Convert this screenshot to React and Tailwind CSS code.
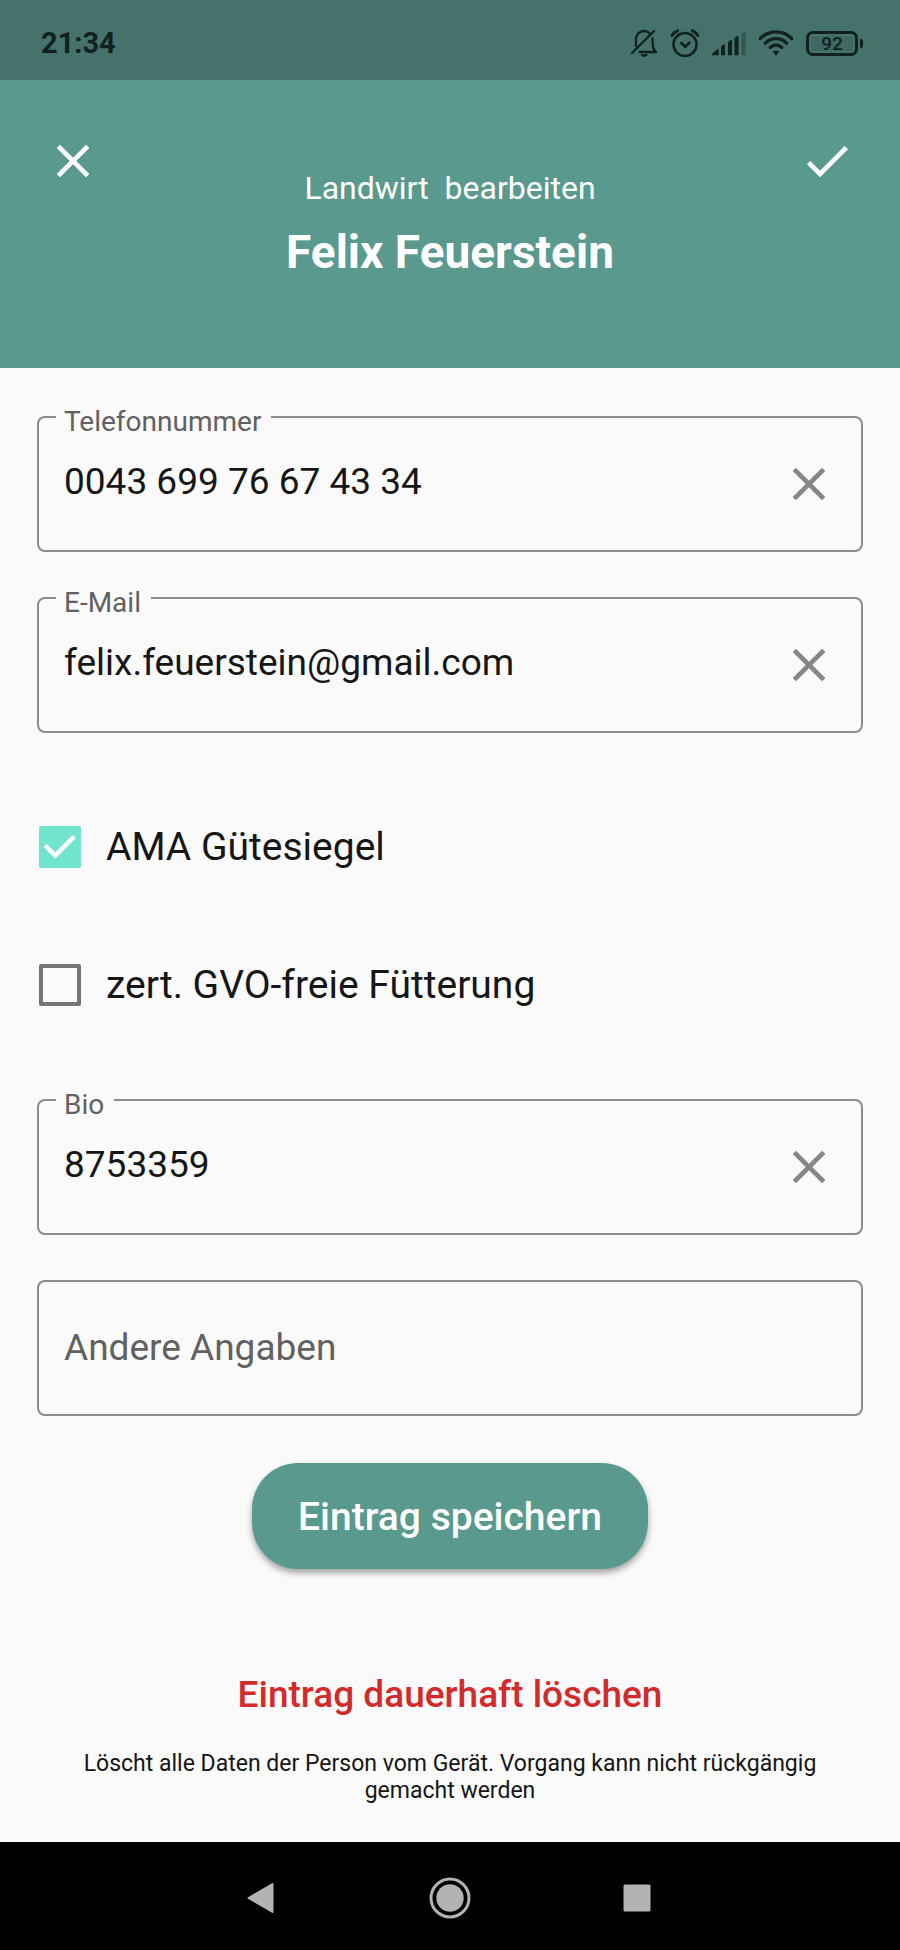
import { useState } from "react";

function CloseIcon({ className }) {
  return (
    <svg viewBox="0 0 24 24" className={className} fill="currentColor" aria-hidden="true">
      <path d="M19 6.41 17.59 5 12 10.59 6.41 5 5 6.41 10.59 12 5 17.59 6.41 19 12 13.41 17.59 19 19 17.59 13.41 12z" />
    </svg>
  );
}

function CheckIcon({ className }) {
  return (
    <svg viewBox="0 0 24 24" className={className} fill="currentColor" aria-hidden="true">
      <path d="M9 16.17 4.83 12l-1.42 1.41L9 19 21 7l-1.41-1.41z" />
    </svg>
  );
}

function BellOffIcon() {
  return (
    <svg viewBox="0 0 28 28" className="h-7 w-7" fill="none" stroke="currentColor" strokeWidth="2.300" strokeLinecap="round" strokeLinejoin="round" aria-hidden="true">
      <path d="M2 24 24 2" />
      <path d="M6 17V10.500C6 5.500 9.500 2 14 2c2.300 0 4.300 .8 5.700 2.200" />
      <path d="M22.500 9.500c.3 4.500 .2 9 1.200 10.500L26 23H9.500" />
      <path d="M10.500 25.200h7.500c-.8 1.900-2.200 2.500-3.700 2.500s-3-.6-3.800-2.500z" fill="currentColor" stroke="none" />
    </svg>
  );
}

function AlarmIcon() {
  return (
    <svg viewBox="0 0 30 28" className="h-7 w-[30px]" fill="none" stroke="currentColor" strokeLinecap="round" strokeLinejoin="round" aria-hidden="true">
      <circle cx="15" cy="15.500" r="11.500" strokeWidth="2.500" />
      <path d="m11.300 14 4 3.700 4.200-4" strokeWidth="2.600" />
      <path d="M2 6.600Q4 3.200 7.700 1.600M28 6.600Q26 3.200 22.300 1.600" strokeWidth="2.800" />
    </svg>
  );
}

function SignalIcon() {
  return (
    <svg viewBox="0 0 34 25" className="h-[25px] w-[34px]" fill="currentColor" aria-hidden="true">
      <path d="M0 24.300q0-2 1.500-3L5.600 18.200q1.200-.6 1.200 .6V24.300z" />
      <path d="M9 15.500l3.200-2.300q.8-.3 .8 .7V24.300H9zM16 11l3.200-2.300q.8-.3 .8 .7V24.300H16zM22.500 7l3.200-2.300q.8-.3 .8 .7V24.300h-4z" />
      <path d="M29.500 3l3.200-2.600q.8-.3 .8 .7V24.300h-4z" opacity="0.35" />
    </svg>
  );
}

function WifiIcon() {
  return (
    <svg viewBox="0 0 36 26" className="h-[26px] w-9" fill="none" stroke="currentColor" strokeWidth="3.300" strokeLinecap="round" aria-hidden="true">
      <path d="M2.200 8.600C11-0.400 25-0.400 33.800 8.600" />
      <path d="M7.300 13.200C13.500 7.200 22.500 7.200 28.700 13.200" />
      <path d="M12.200 17.400C15.500 14.200 20.500 14.200 23.800 17.400" />
      <path d="M14.800 21.500q3.200-1.800 6.400 0-.8 2-3.200 3.700-2.400-1.700-3.200-3.700z" fill="currentColor" stroke="none" />
    </svg>
  );
}

function Battery({ level }) {
  return (
    <div className="flex items-center gap-[2px]">
      <div className="flex h-[25px] w-[52px] items-center justify-center rounded-[7px] border-3 border-[#11211f] p-[2px]">
        <span className="flex h-full w-full items-center justify-center bg-[#3f6962] pt-[1px] text-[19px] leading-none font-medium">
          {level}
        </span>
      </div>
      <div className="h-[9px] w-[3px] rounded-r-[2px] bg-[#11211f]" />
    </div>
  );
}

function StatusBar() {
  return (
    <div className="flex h-20 items-center justify-between bg-[#45726b] pr-[37px] pl-[41px] pt-[6px] text-[#11211f]">
      <span className="text-[29px] leading-8 font-bold">21:34</span>
      <div className="flex items-center gap-3">
        <BellOffIcon />
        <AlarmIcon />
        <SignalIcon />
        <WifiIcon />
        <Battery level={92} />
      </div>
    </div>
  );
}

function TextField({ id, label, type = "text", value, onChange }) {
  const filled = value !== "";
  return (
    <div className="relative flex h-[136px] items-center rounded-lg border-2 border-[#8b8b8b]">
      <label
        htmlFor={id}
        className={
          filled
            ? "absolute -top-[14px] left-[17px] bg-[#fafafa] pr-[10px] pl-2 text-[28px] leading-9 text-[#616161]"
            : "absolute inset-y-0 left-[25px] flex items-center text-[37px] leading-11 text-[#616161]"
        }
      >
        {label}
      </label>
      <input
        id={id}
        type={type}
        value={value}
        onChange={(e) => onChange(e.target.value)}
        className="h-full min-w-0 flex-1 bg-transparent pb-[5px] pl-[25px] text-[37px] text-[#161616] outline-none"
      />
      {filled && (
        <button type="button" aria-label={label + " leeren"} onClick={() => onChange("")} className="mr-6 text-[#868686]">
          <CloseIcon className="h-14 w-14" />
        </button>
      )}
    </div>
  );
}

function CheckField({ id, label, checked, onChange }) {
  return (
    <div className="flex h-14 items-center gap-[25px] pl-[2px]">
      <span className="relative flex h-[42px] w-[42px]">
        <input
          id={id}
          type="checkbox"
          checked={checked}
          onChange={(e) => onChange(e.target.checked)}
          className="h-full w-full appearance-none rounded-[2px] border-4 border-[#757575] checked:border-[#70e4cd] checked:bg-[#70e4cd]"
        />
        {checked && (
          <svg viewBox="0 0 42 42" className="pointer-events-none absolute inset-0 h-full w-full text-white" fill="none" stroke="currentColor" strokeWidth="4.500" aria-hidden="true">
            <path d="M6.200 19.500 16.200 29.500 35.200 10.500" />
          </svg>
        )}
      </span>
      <label htmlFor={id} className="text-[39px] leading-[48px] text-[#161616]">
        {label}
      </label>
    </div>
  );
}

function NavBar() {
  return (
    <nav className="flex h-[108px] items-center justify-center bg-black text-[#b3b3b3]">
      <div className="grid grid-cols-3 items-center justify-items-center gap-[146px] pt-1">
        <button type="button" aria-label="Zurück">
          <svg viewBox="0 0 42 42" className="h-[42px] w-[42px]" fill="currentColor" aria-hidden="true">
            <path d="M7 20.200 31 6.200q1.500-.6 1.500 1V34.800q0 1.600-1.500 1L7 21.800q-1.200-.8 0-1.600z" />
          </svg>
        </button>
        <button type="button" aria-label="Startseite">
          <svg viewBox="0 0 42 42" className="h-[42px] w-[42px]" aria-hidden="true">
            <circle cx="21" cy="21" r="19" fill="none" stroke="currentColor" strokeWidth="3" />
            <circle cx="21" cy="21" r="13.700" fill="currentColor" />
          </svg>
        </button>
        <button type="button" aria-label="Übersicht">
          <svg viewBox="0 0 42 42" className="h-[42px] w-[42px]" fill="currentColor" aria-hidden="true">
            <rect x="6.500" y="7.500" width="27" height="27" rx="1.500" />
          </svg>
        </button>
      </div>
    </nav>
  );
}

export default function App() {
  const [phone, setPhone] = useState("0043 699 76 67 43 34");
  const [email, setEmail] = useState("felix.feuerstein@gmail.com");
  const [ama, setAma] = useState(true);
  const [gvo, setGvo] = useState(false);
  const [bio, setBio] = useState("8753359");
  const [other, setOther] = useState("");

  return (
    <div className="flex min-h-screen flex-col bg-[#fafafa] font-['Roboto',sans-serif] text-[#161616]">
      <StatusBar />
      <header className="flex items-start justify-between bg-[#5a998d] px-[45px] pt-[53px] pb-[88px] text-white">
        <button type="button" aria-label="Schließen">
          <CloseIcon className="h-14 w-14" />
        </button>
        <div className="flex flex-col items-center gap-4 pt-[35px] text-center">
          <p className="text-[32px] leading-10 whitespace-pre">Landwirt  bearbeiten</p>
          <h1 className="text-[46px] leading-[56px] font-bold">Felix Feuerstein</h1>
        </div>
        <button type="button" aria-label="Bestätigen">
          <CheckIcon className="h-14 w-14" />
        </button>
      </header>

      <main className="flex-1 px-[37px] pt-12 pb-9">
        <form className="flex flex-col" onSubmit={(e) => e.preventDefault()}>
          <div className="flex flex-col gap-[45px]">
            <TextField id="phone" label="Telefonnummer" type="tel" value={phone} onChange={setPhone} />
            <TextField id="email" label="E-Mail" type="email" value={email} onChange={setEmail} />
          </div>
          <div className="flex flex-col gap-[82px] py-[86px]">
            <CheckField id="ama" label="AMA Gütesiegel" checked={ama} onChange={setAma} />
            <CheckField id="gvo" label="zert. GVO-freie Fütterung" checked={gvo} onChange={setGvo} />
          </div>
          <div className="flex flex-col gap-[45px]">
            <TextField id="bio" label="Bio" value={bio} onChange={setBio} />
            <TextField id="other" label="Andere Angaben" value={other} onChange={setOther} />
          </div>
          <button
            type="submit"
            className="mt-[47px] h-[106px] self-center rounded-[46px] bg-[#5a998d] px-[46px] pt-[2px] text-[39px] font-medium text-white shadow-[0_4px_6px_rgba(0,0,0,0.35)]"
          >
            Eintrag speichern
          </button>
          <button type="button" className="mt-[104px] self-center text-[37px] leading-11 font-medium text-[#d32b2b]">
            Eintrag dauerhaft löschen
          </button>
          <p className="mt-[33px] px-8 text-center text-[23px] leading-[27px]">
            Löscht alle Daten der Person vom Gerät. Vorgang kann nicht rückgängig gemacht werden
          </p>
        </form>
      </main>
      <NavBar />
    </div>
  );
}
